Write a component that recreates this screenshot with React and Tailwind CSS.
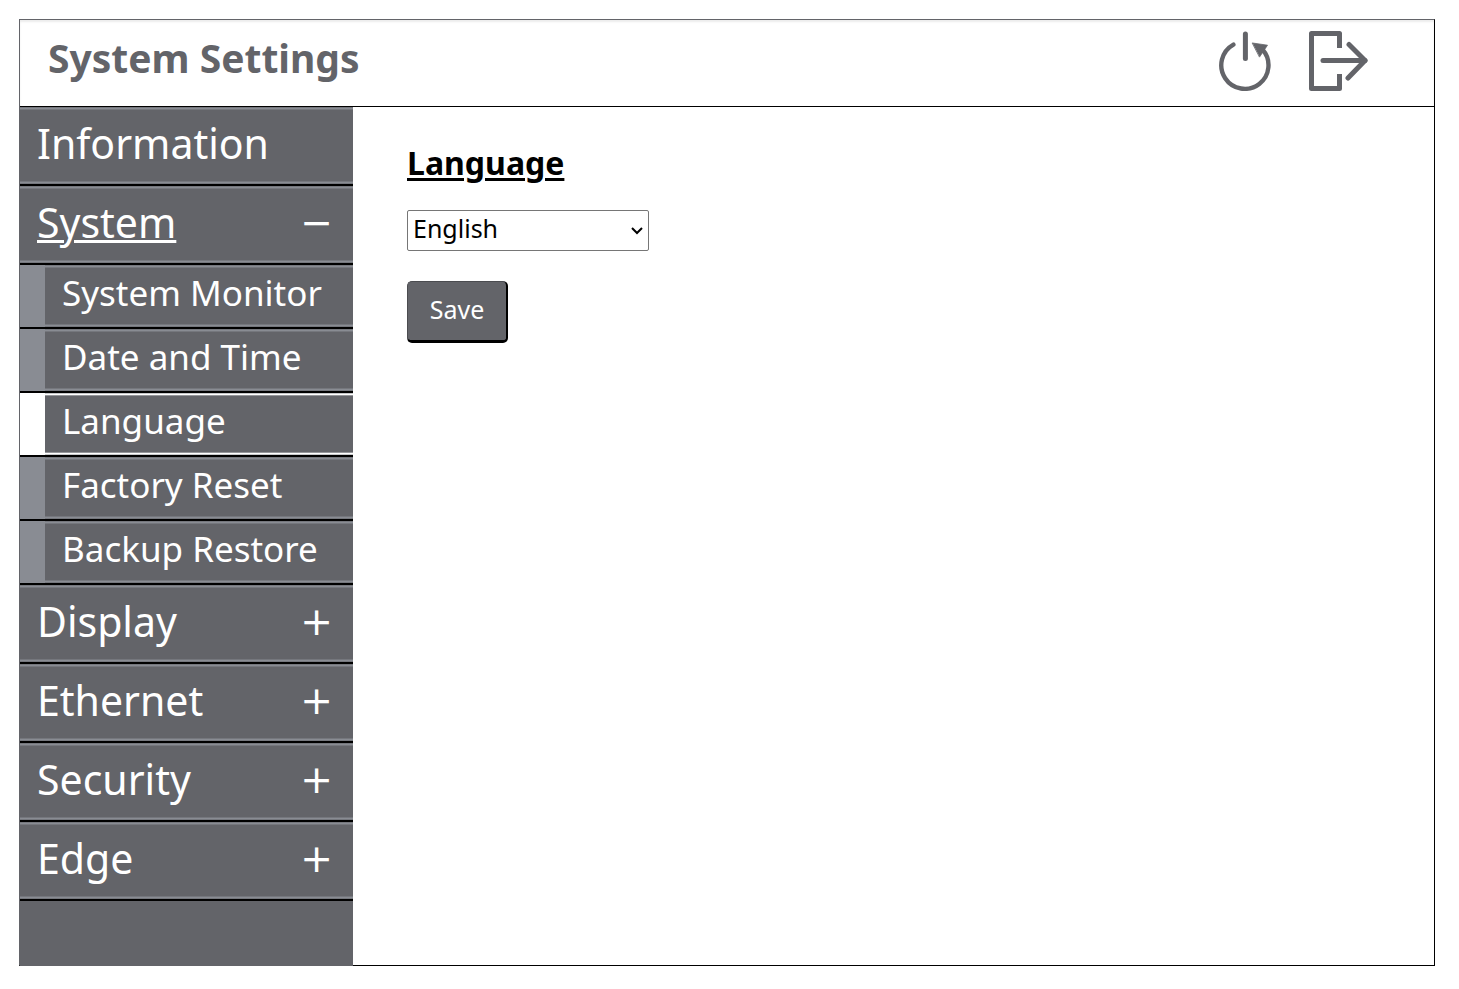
import { useState } from 'react';

const MENU = [
  { label: 'Information' },
  {
    label: 'System',
    children: ['System Monitor', 'Date and Time', 'Language', 'Factory Reset', 'Backup Restore'],
  },
  { label: 'Display', children: [] },
  { label: 'Ethernet', children: [] },
  { label: 'Security', children: [] },
  { label: 'Edge', children: [] },
];

function RestartIcon() {
  return (
    <svg width="54" height="62" viewBox="0 0 54 62" fill="none" stroke="#636469" strokeWidth="4.4" strokeLinecap="round">
      <path d="M15.4 15.6 A23.6 23.6 0 1 0 44.5 20.5" />
      <path d="M27.4 5 V29.5" strokeWidth="5" />
      <path d="M34.5 14 L49.5 16.2 L41.7 27.8 Z" fill="#636469" stroke="#636469" strokeWidth="0.8" />
    </svg>
  );
}

function LogoutIcon() {
  return (
    <svg width="60" height="62" viewBox="0 0 60 62" fill="none" stroke="#636469" strokeWidth="5" strokeLinejoin="round">
      <path d="M31.5 19 V4.5 H3.5 V59.5 H31.5 V45" />
      <path d="M15 31.5 H57" strokeLinecap="round" />
      <path d="M41 15.5 L57 31.5 L40 49" strokeLinecap="round" />
    </svg>
  );
}

function MenuItem({ label, open, expandable, onClick }) {
  return (
    <li className="border-b-2 border-black">
      <button
        type="button"
        onClick={onClick}
        className="flex h-[77px] w-full items-center justify-between border-y border-[#75777d] pr-5 pb-1 pl-[17px] text-[41px] leading-none text-white shadow-[inset_0_1px_#898c93,inset_0_-1px_#898c93,inset_0_2px_#75777d,inset_0_-2px_#75777d]"
      >
        <span className={open ? 'underline decoration-3 underline-offset-2' : ''}>{label}</span>
        {expandable && <span className="font-['DejaVu_Sans',sans-serif] text-[39px] leading-none">{open ? '−' : '+'}</span>}
      </button>
    </li>
  );
}

function SubItem({ label, active, onClick }) {
  return (
    <li className={`border-b-2 border-black ${active ? 'bg-white' : 'bg-[#898c93]'}`}>
      <a
        href="#"
        onClick={onClick}
        className={`ml-[25px] flex h-[62px] items-center border-y bg-[#636469] pb-2 pl-[17px] text-[35px] leading-none text-white ${
          active
            ? 'border-[#c8c9cb] shadow-[inset_0_1px_#ffffff,inset_0_-1px_#ffffff,inset_0_2px_#96979b,inset_0_-2px_#96979b]'
            : 'border-[#75777d] shadow-[inset_0_1px_#898c93,inset_0_-1px_#898c93,inset_0_2px_#75777d,inset_0_-2px_#75777d]'
        }`}
      >
        {label}
      </a>
    </li>
  );
}

export default function App() {
  const [open, setOpen] = useState('System');
  const [page, setPage] = useState('Language');
  const [language, setLanguage] = useState('English');

  return (
    <div className="flex min-h-screen bg-white pt-[19px] pr-6 pb-[23px] pl-[19px] font-['Noto_Sans',sans-serif]">
      <div className="flex flex-1 flex-col border border-black border-t-[#636469] border-l-[#636469]">
        <header className="flex h-[87px] items-center justify-between border-b border-black pr-[66px] pl-7 shadow-[inset_0_2px_2px_#ececec]">
          <h1 className="pb-3 text-[39px] leading-none font-bold text-[#636469]">System Settings</h1>
          <div className="flex gap-9 pb-1.5">
            <button type="button" aria-label="Restart">
              <RestartIcon />
            </button>
            <button type="button" aria-label="Log out">
              <LogoutIcon />
            </button>
          </div>
        </header>

        <div className="flex flex-1">
          <nav className="-mb-px w-[333px] shrink-0 bg-[#636469]">
            <ul>
              {MENU.map(({ label, children }) => (
                <div key={label} className="contents">
                  <MenuItem
                    label={label}
                    open={open === label}
                    expandable={Boolean(children)}
                    onClick={() => setOpen(open === label ? '' : label)}
                  />
                  {open === label &&
                    children?.map((child) => (
                      <SubItem key={child} label={child} active={page === child} onClick={() => setPage(child)} />
                    ))}
                </div>
              ))}
            </ul>
          </nav>

          <main className="flex flex-1 flex-col items-start pt-9 pl-[54px]">
            <h2 id="language-title" className="text-[32px] leading-10 font-bold text-black underline decoration-3 underline-offset-3">
              Language
            </h2>
            <div className="relative mt-[27px]">
              <select
                aria-labelledby="language-title"
                value={language}
                onChange={(e) => setLanguage(e.target.value)}
                className="block h-[41px] w-[242px] appearance-none rounded-xs border border-[#767676] bg-white pr-6 pb-1 pl-[5px] text-[25px] leading-[35px] text-black"
              >
                <option>English</option>
              </select>
              <svg
                className="pointer-events-none absolute top-[17px] right-1.5"
                width="12"
                height="8"
                viewBox="0 0 12 8"
                fill="none"
                stroke="#000"
                strokeWidth="2"
              >
                <path d="M1 1 L6 6 L11 1" />
              </svg>
            </div>
            <button
              type="button"
              className="mt-[30px] h-[62px] w-[101px] rounded-[5px] border-t border-r-2 border-b-3 border-l border-t-[#4b4c50] border-r-black border-b-black border-l-[#4b4c50] bg-[#636469] pb-1 text-[25px] leading-none text-white"
            >
              Save
            </button>
          </main>
        </div>
      </div>
    </div>
  );
}
